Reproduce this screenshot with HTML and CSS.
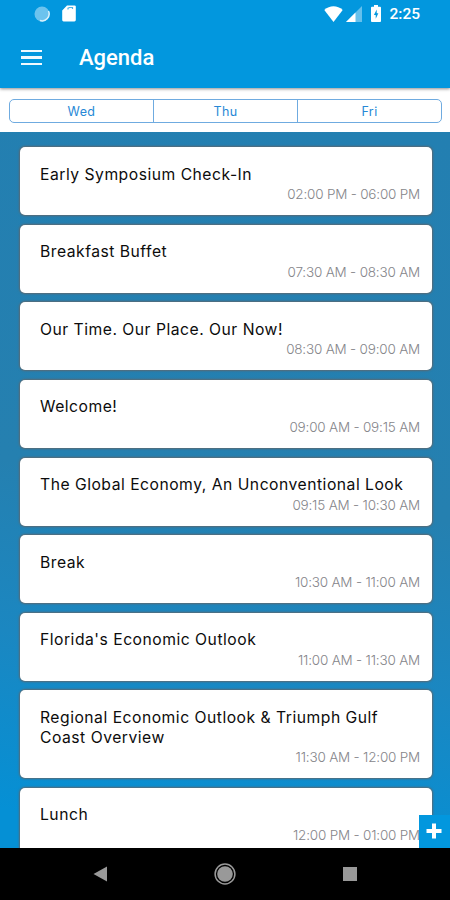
FILE: index.html
```html
<!DOCTYPE html>
<html lang="en">
<head>
  <meta charset="UTF-8">
  <title>Agenda</title>
  <link rel="stylesheet" href="styles.css">
</head>
<body>

<div class="phone">
  <!-- Status bar -->
  <div class="status-bar">
    <div class="status-left">
      <svg width="16" height="16" viewBox="0 0 16 16">
        <circle cx="8" cy="8" r="7.5" fill="#6cc3ee"/>
        <path d="M14.5 5a7 7 0 0 1-8.5 9.5" fill="none" stroke="#d9f1fc" stroke-width="1.5"/>
      </svg>
      <svg width="14" height="17" viewBox="0 0 14 17">
        <path d="M5 0.5h7.5A1.3 1.3 0 0 1 13.8 2v13a1.4 1.4 0 0 1-1.4 1.4H1.6A1.4 1.4 0 0 1 0.2 15V5.5z" fill="#fff"/>
        <path d="M6 4.5V3.2L7.5 2.5h3V4" fill="none" stroke="#4db4e6" stroke-width="1.2"/>
      </svg>
    </div>
    <div class="status-right">
      <svg class="wifi" width="19" height="16" viewBox="0 0 20 16" preserveAspectRatio="none">
        <path d="M0.3 4C6-0.9 14-0.9 19.7 4L10 16z" fill="#fff"/>
      </svg>
      <svg class="signal" width="16" height="16" viewBox="0 0 16 16">
        <path d="M0 16L16 0v16z" fill="#65c0ec"/>
        <path d="M0 16L9.5 6.5V16z" fill="#fff"/>
      </svg>
      <svg class="battery" width="10" height="17" viewBox="0 0 11 17" preserveAspectRatio="none">
        <path d="M3.3 0h4.4v1.8H10a1 1 0 0 1 1 1V16a1 1 0 0 1-1 1H1a1 1 0 0 1-1-1V2.8a1 1 0 0 1 1-1h2.3z" fill="#fff"/>
        <path d="M6.3 4.5L3.2 10h2v3.8l2.9-5.5H6.3z" fill="#0297de"/>
      </svg>
      <span class="clock">2:25</span>
    </div>
  </div>

  <!-- Title bar -->
  <header class="app-bar">
    <div class="menu-icon">
      <span></span>
      <span></span>
      <span></span>
    </div>
    <h1>Agenda</h1>
  </header>

  <!-- Day picker -->
  <div class="tabs">
    <div class="segment">
      <div class="tab">Wed</div>
      <div class="tab">Thu</div>
      <div class="tab">Fri</div>
    </div>
  </div>

  <!-- Sessions -->
  <main class="agenda">
    <div class="card">
      <div class="title">Early Symposium Check-In</div>
      <div class="time">02:00 PM - 06:00 PM</div>
    </div>
    <div class="card">
      <div class="title">Breakfast Buffet</div>
      <div class="time">07:30 AM - 08:30 AM</div>
    </div>
    <div class="card">
      <div class="title">Our Time. Our Place. Our Now!</div>
      <div class="time">08:30 AM - 09:00 AM</div>
    </div>
    <div class="card">
      <div class="title">Welcome!</div>
      <div class="time">09:00 AM - 09:15 AM</div>
    </div>
    <div class="card">
      <div class="title">The Global Economy, An Unconventional Look</div>
      <div class="time">09:15 AM - 10:30 AM</div>
    </div>
    <div class="card">
      <div class="title">Break</div>
      <div class="time">10:30 AM - 11:00 AM</div>
    </div>
    <div class="card">
      <div class="title">Florida's Economic Outlook</div>
      <div class="time">11:00 AM - 11:30 AM</div>
    </div>
    <div class="card">
      <div class="title">Regional Economic Outlook &amp; Triumph Gulf<br>Coast Overview</div>
      <div class="time">11:30 AM - 12:00 PM</div>
    </div>
    <div class="card">
      <div class="title">Lunch</div>
      <div class="time">12:00 PM - 01:00 PM</div>
    </div>
    <div class="add-btn">
      <svg width="16" height="16" viewBox="0 0 16 16">
        <path d="M8 0.5v15M0.5 8h15" stroke="#fff" stroke-width="4"/>
      </svg>
    </div>
  </main>

  <!-- Android navigation -->
  <nav class="nav-bar">
    <svg width="14" height="16" viewBox="0 0 14 16">
      <path d="M14 0.5v15L0.5 8z" fill="#999"/>
    </svg>
    <svg width="22" height="22" viewBox="0 0 22 22">
      <circle cx="11" cy="11" r="9.9" fill="none" stroke="#999" stroke-width="1.5"/>
      <circle cx="11" cy="11" r="7.8" fill="#999"/>
    </svg>
    <svg width="14" height="14" viewBox="0 0 14 14">
      <rect width="14" height="14" fill="#999"/>
    </svg>
  </nav>
</div>

</body>
</html>
```
FILE: styles.css
```css
* {
  box-sizing: border-box;
}

body {
  margin: 0;
  font-family: Inter, sans-serif;
}

.phone {
  width: 450px;
  height: 900px;
  display: flex;
  flex-direction: column;
  overflow: hidden;
}

/* status bar */
.status-bar {
  height: 28px;
  flex: none;
  display: flex;
  justify-content: space-between;
  align-items: center;
  padding: 0 30px 1px 34px;
  background: #0297de;
  z-index: 2;
}

.status-left,
.status-right {
  display: flex;
  align-items: center;
}

.status-left {
  gap: 12px;
}

.signal {
  margin-left: 3px;
}

.battery {
  margin-left: 9px;
}

.clock {
  margin-left: 8px;
  font: 500 15.5px/20px Roboto, sans-serif;
  color: #fff;
}

/* title bar */
.app-bar {
  height: 60px;
  flex: none;
  display: flex;
  align-items: center;
  padding: 0 21px 1px;
  background: #0297de;
  box-shadow: 0 1px 3px rgba(0, 0, 0, 0.45);
  z-index: 1;
}

.menu-icon {
  display: flex;
  flex-direction: column;
  gap: 4px;
  width: 21px;
  margin-right: 37px;
}

.menu-icon span {
  height: 2.4px;
  background: #f0f9fe;
}

h1 {
  margin: 0;
  font: 500 22px/28px Roboto, sans-serif;
  color: #fff;
}

/* day picker */
.tabs {
  height: 44px;
  flex: none;
  padding: 11px 8px 9px 9px;
  background: #fff;
}

.segment {
  display: flex;
  height: 24px;
  border: 1px solid #6fabe0;
  border-radius: 5px;
}

.tab {
  flex: 1;
  text-align: center;
  font-size: 12.5px;
  line-height: 23px;
  letter-spacing: 0.4px;
  color: #2788d6;
}

.tab + .tab {
  border-left: 1px solid #6fabe0;
}

/* sessions */
.agenda {
  position: relative;
  flex: 1;
  min-height: 0;
  overflow: hidden;
  display: flex;
  flex-direction: column;
  gap: 9.65px;
  padding: 15px 18px 0 20px;
  background: linear-gradient(188deg, #237fb1 0%, #2580b0 50%, #1b87c1 72%, #0590d5 95%);
}

.card {
  flex: none;
  min-height: 68px;
  padding: 17.5px 12px 0 20px;
  background: #fff;
  border-radius: 5px;
  box-shadow: 0 0 2px 1px #5b6972;
}

.title {
  font-size: 15.7px;
  font-weight: 400;
  line-height: 19.6px;
  letter-spacing: 0.5px;
  white-space: nowrap;
  color: #0c0c0c;
}

.time {
  height: 30.9px;
  font-size: 13.5px;
  font-weight: 300;
  line-height: 20px;
  letter-spacing: -0.2px;
  text-align: right;
  color: #85858a;
}

.add-btn {
  position: absolute;
  right: 0;
  bottom: 0;
  width: 31px;
  height: 33px;
  display: flex;
  align-items: center;
  justify-content: center;
  padding: 0 1px 2px 0;
  background: #0297de;
}

/* android navigation */
.nav-bar {
  height: 52px;
  flex: none;
  display: flex;
  justify-content: space-between;
  align-items: center;
  padding: 0 93px;
  background: #000;
}
```
